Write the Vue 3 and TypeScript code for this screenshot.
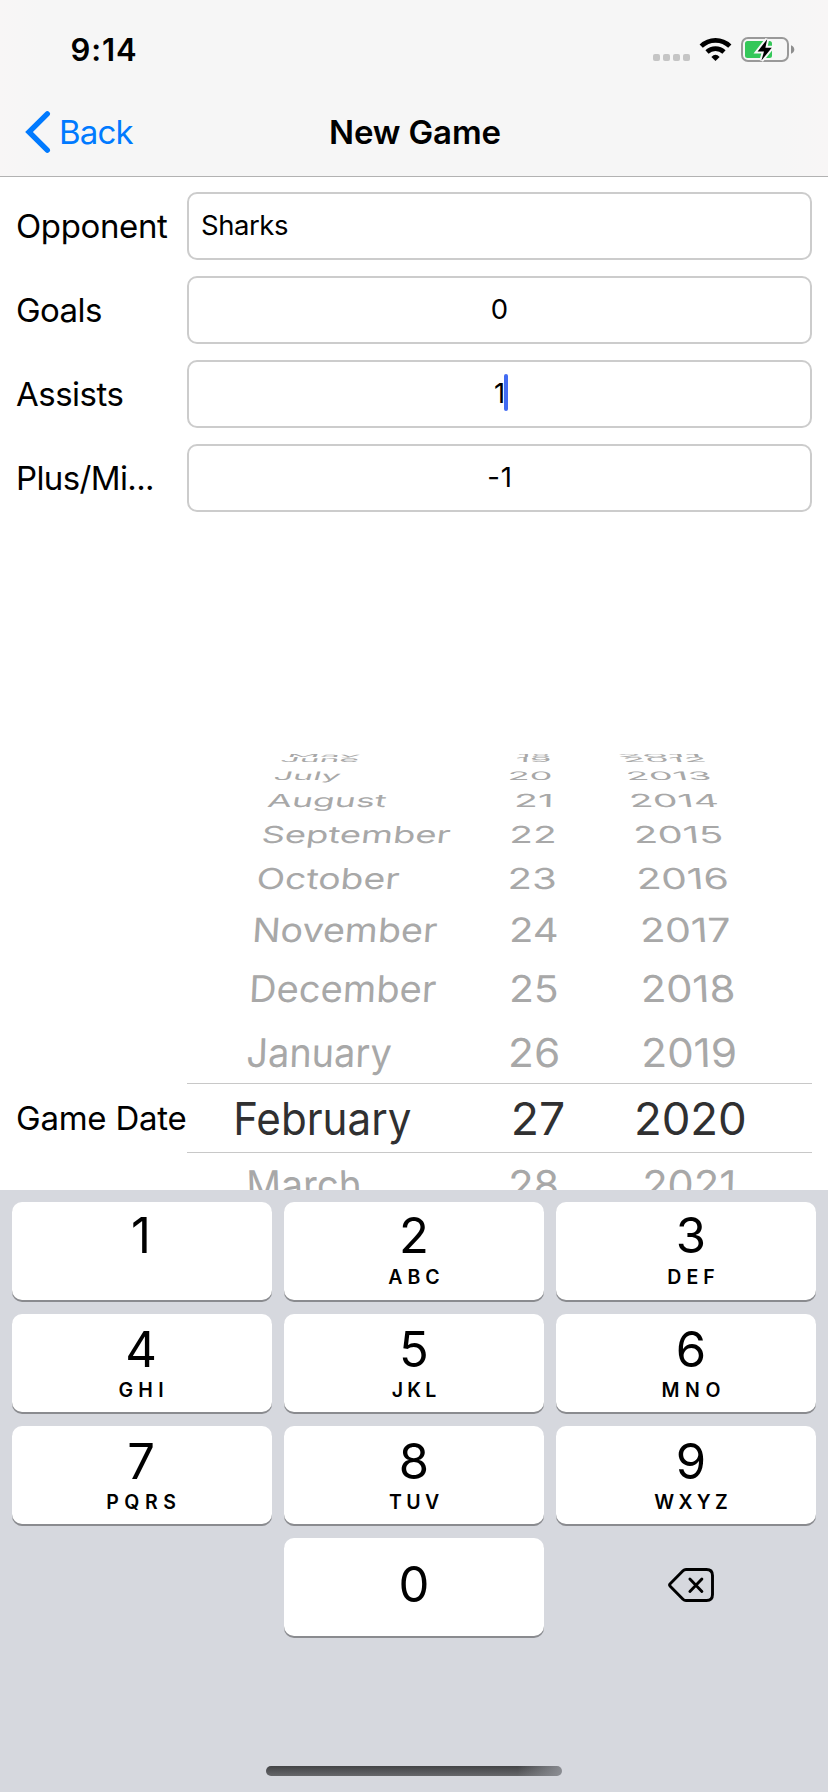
<script setup lang="ts">
interface Field { label: string; labelWidth: number; value: string; valueWidth: number; centered: boolean; focused: boolean }
interface Key { digit: string; letters: string; width: number }
interface WheelRow { baseline: number; cap: number; skew: number; items: [string, number, number][]; selected?: boolean }

const FAMILY = 'Inter, "Liberation Sans", sans-serif'
const ctx = document.createElement('canvas').getContext('2d')!

// Bounds of the inked part of a string, relative to its origin.
function ink(text: string, size: number, weight: number) {
  ctx.font = `${weight} ${size}px ${FAMILY}`
  const m = ctx.measureText(text)
  return { left: -m.actualBoundingBoxLeft, right: m.actualBoundingBoxRight }
}

// Tracking that brings a string to the wanted width.
function track(text: string, size: number, weight: number, width: number) {
  if (text.length < 2) return {}
  const b = ink(text, size, weight)
  const spacing = (width - (b.right - b.left)) / (text.length - 1)
  return { letterSpacing: `${spacing.toFixed(3)}px`, marginRight: `${(-spacing).toFixed(3)}px` }
}

const fields: Field[] = [
  { label: 'Opponent', labelWidth: 151, value: 'Sharks', valueWidth: 86, centered: false, focused: false },
  { label: 'Goals', labelWidth: 84, value: '0', valueWidth: 14, centered: true, focused: false },
  { label: 'Assists', labelWidth: 106.5, value: '1', valueWidth: 8, centered: true, focused: true },
  { label: 'Plus/Mi...', labelWidth: 134, value: '-1', valueWidth: 21.5, centered: true, focused: false },
]

const keys: Key[] = [
  { digit: '1', letters: '', width: 0 },
  { digit: '2', letters: 'ABC', width: 51 },
  { digit: '3', letters: 'DEF', width: 46 },
  { digit: '4', letters: 'GHI', width: 43.7 },
  { digit: '5', letters: 'JKL', width: 44.5 },
  { digit: '6', letters: 'MNO', width: 57 },
  { digit: '7', letters: 'PQRS', width: 68 },
  { digit: '8', letters: 'TUV', width: 50 },
  { digit: '9', letters: 'WXYZ', width: 73 },
]

// Each item is [text, left edge, right edge]; rows flatten towards the top of the drum.
const wheel: WheelRow[] = [
  { baseline: 757.3, cap: 3, skew: 0.5, items: [['May', 289, 359], ['18', 519, 549], ['2011', 620, 700]] },
  { baseline: 762.3, cap: 5, skew: 0.4, items: [['June', 281, 357], ['19', 517, 549.5], ['2012', 626, 705]] },
  { baseline: 779.7, cap: 8.5, skew: 0.3, items: [['July', 274.3, 339], ['20', 510, 551], ['2013', 629.5, 710.5]] },
  { baseline: 807, cap: 13, skew: 0.19, items: [['August', 267.3, 385], ['21', 516.7, 551], ['2014', 633, 717.5]] },
  { baseline: 843, cap: 17, skew: 0.12, items: [['September', 262.3, 449], ['22', 512, 554], ['2015', 637, 722.5]] },
  { baseline: 888.6, cap: 21, skew: 0.09, items: [['October', 257.5, 398], ['23', 510.3, 554.7], ['2016', 640, 727.5]] },
  { baseline: 942, cap: 24.3, skew: 0.07, items: [['November', 254, 436], ['24', 511.7, 556.3], ['2017', 643.5, 730]] },
  { baseline: 1002.2, cap: 26.8, skew: 0.05, items: [['December', 251, 435.3], ['25', 511.7, 557], ['2018', 644, 733.8]] },
  { baseline: 1066.7, cap: 28.8, skew: 0.03, items: [['January', 247.7, 390.7], ['26', 511, 558], ['2019', 644.5, 735.3]] },
  { baseline: 1135, cap: 32.5, skew: 0, selected: true, items: [['February', 236, 410.7], ['27', 514, 563.3], ['2020', 637, 745]] },
  { baseline: 1199, cap: 28.8, skew: -0.03, items: [['March', 249.5, 359.5], ['28', 511, 557.3], ['2021', 644.5, 733]] },
]

const glyphs = wheel.flatMap((row) =>
  row.items.map(([text, left, right], column) => {
    const b = ink(text, 44, 400)
    const sx = (right - left) / (b.right - b.left)
    const sy = row.cap / (44 * 0.727)
    const lean = row.skew * [1, 0.1, -0.9][column]
    const transform = `matrix(${sx} 0 ${-lean * sy} ${sy} ${left - b.left * sx} ${row.baseline})`
    return { text, transform, selected: !!row.selected }
  }),
)
</script>

<template>
  <div class="screen">
    <header>
      <div class="status">
        <span class="time" :style="track('9:14', 31, 600, 64.5)">9:14</span>
        <svg class="indicators" width="144" height="30" viewBox="652 35 144 30">
          <g fill="#c5c5c5">
            <rect v-for="n in 4" :key="n" :x="643 + n * 10" y="54" width="7" height="7" rx="2" />
          </g>
          <g fill="none" stroke="#000" stroke-width="4.6">
            <path d="M701.2 46.2A20.4 20.4 0 0 1 729.8 46.2" />
            <path d="M707 52A12.3 12.3 0 0 1 724 52" />
          </g>
          <path d="M715.5 61L711.4 56.9Q715.5 52.8 719.6 56.9Z" fill="#000" />
          <rect x="742" y="38" width="46" height="23" rx="6" fill="none" stroke="#999" stroke-width="2" />
          <path d="M791 45.2Q794.3 46.5 794.3 49.5Q794.3 52.5 791 53.8Z" fill="#8e8e8e" />
          <rect x="745" y="41" width="27" height="17" rx="2.5" fill="#34c759" />
          <path d="M767.2 39.2L757.6 51.5H764L761.4 60.6L771.8 47.7H765.4Z" fill="#000" stroke="#f8f8f8" stroke-width="4" paint-order="stroke" />
        </svg>
      </div>
      <nav>
        <a class="back">
          <svg width="26" height="44" viewBox="25 110 26 44"><path d="M47.3 113.8L29 132L47.3 150.2" fill="none" stroke="#007aff" stroke-width="5.4" stroke-linecap="round" stroke-linejoin="miter" /></svg>
          <span class="back-text" :style="track('Back', 33, 400, 72.5)">Back</span>
        </a>
        <h1><span :style="track('New Game', 33, 600, 169.5)">New Game</span></h1>
      </nav>
    </header>

    <main>
      <div v-for="f in fields" :key="f.label" class="row">
        <label><span :style="track(f.label, 33, 400, f.labelWidth)">{{ f.label }}</span></label>
        <div class="input" :class="{ centered: f.centered }">
          <span class="value" :style="track(f.value, 27.5, 400, f.valueWidth)">{{ f.value }}<i v-if="f.focused" class="caret" /></span>
        </div>
      </div>
      <div class="date-row">
        <label><span :style="track('Game Date', 33, 400, 168.5)">Game Date</span></label>
        <svg width="625" height="436" viewBox="187 754 625 436">
          <path d="M187 1083.5H812M187 1152.5H812" stroke="#c8c8c8" stroke-width="1" />
          <text v-for="g in glyphs" :key="g.text" class="drum" :class="{ selected: g.selected }" :transform="g.transform">{{ g.text }}</text>
        </svg>
      </div>
    </main>

    <section class="keyboard">
      <div class="keys">
        <div v-for="k in keys" :key="k.digit" class="key">
          <span class="digit">{{ k.digit }}</span>
          <span class="letters" :style="track(k.letters, 19.5, 600, k.width)">{{ k.letters }}</span>
        </div>
        <div class="blank" />
        <div class="key zero"><span class="digit">0</span></div>
        <div class="blank erase">
          <svg width="48" height="36" viewBox="0 0 48 36" fill="none" stroke="#000" stroke-width="2.9" stroke-linecap="round" stroke-linejoin="round">
            <path d="M19 2.5H39.5Q45.5 2.5 45.5 8.5V27.5Q45.5 33.5 39.5 33.5H19Q17.3 33.5 16 32.2L3.2 19.2Q2 18 3.2 16.8L16 3.8Q17.3 2.5 19 2.5Z" />
            <path d="M22.9 12L34.9 24.4M34.9 12L22.9 24.4" />
          </svg>
        </div>
      </div>
      <div class="home" />
    </section>
  </div>
</template>

<style>
body { margin: 0; background: #fff; }
</style>

<style scoped>
.screen {
  width: 828px;
  height: 1792px;
  display: flex;
  flex-direction: column;
  overflow: hidden;
  background: #fff;
  color: #000;
  font-family: Inter, "Liberation Sans", sans-serif;
  white-space: nowrap;
}
header {
  height: 176px;
  flex: none;
  border-bottom: 1px solid #b2b2b2;
  background: linear-gradient(90deg, #f8f6f6, #f6f6f6 40px, #f6f6f6 780px, #f8f6f6);
}
.status {
  height: 88px;
  box-sizing: border-box;
  padding: 12px 32px 0 70.5px;
  display: flex;
  justify-content: space-between;
  align-items: flex-start;
}
.time { font-size: 31px; font-weight: 600; line-height: 75px; }
.indicators { margin-top: 23px; }
nav {
  height: 88px;
  display: grid;
  grid-template-columns: 1fr auto 1fr;
  align-items: center;
}
.back { display: flex; align-items: center; padding-left: 25px; color: #007aff; font-size: 33px; }
.back-text { padding-left: 8px; }
h1 { margin: 0; padding-left: 2px; font-size: 33px; font-weight: 600; }
main {
  height: 1013px;
  flex: none;
  box-sizing: border-box;
  padding: 15px 16px 0;
  display: flex;
  flex-direction: column;
  gap: 16px;
}
.row { display: grid; grid-template-columns: 171px 625px; height: 68px; align-items: center; }
label { font-size: 33px; line-height: 40px; }
.input {
  height: 68px;
  box-sizing: border-box;
  border: 2px solid #ccc;
  border-radius: 10px;
  padding: 0 12px 2px;
  display: flex;
  align-items: center;
  font-size: 27.5px;
}
.centered { justify-content: center; }
.value { position: relative; }
.caret {
  position: absolute;
  right: -3px;
  top: -2px;
  width: 4px;
  height: 37px;
  border-radius: 2px;
  background: #426bf2;
}
.date-row { display: grid; grid-template-columns: 171px 625px; margin-top: 226px; height: 436px; }
.date-row label { padding-top: 344px; }
.date-row svg { display: block; }
.drum { font-size: 44px; fill: #a8a8a8; }
.drum.selected { fill: #303031; }
.keyboard {
  flex: 1;
  background: #d6d8de;
  padding: 12px 12px 0;
  display: flex;
  flex-direction: column;
  align-items: center;
}
.keys { display: grid; grid-template-columns: repeat(3, 260px); grid-auto-rows: 98px; gap: 14px 12px; }
.key {
  border-radius: 10px;
  background: #fff;
  box-shadow: 0 2px 0 #8a8b8f;
  display: flex;
  flex-direction: column;
  align-items: center;
}
.key:nth-child(3n + 1) { padding-right: 2px; }
.key:nth-child(3n) { padding-left: 10px; width: 250px; }
.digit { font-size: 49px; line-height: 60px; padding-top: 6px; }
.letters { font-size: 19.5px; font-weight: 600; line-height: 20px; }
.key:nth-child(-n + 3) .digit { padding-top: 4px; }
.key:nth-child(-n + 3) .letters { padding-top: 1px; }
.zero .digit { padding-top: 17px; }
.erase { display: flex; justify-content: center; padding: 12px 0 0 10px; }
.erase svg { margin-top: 17px; }
.home {
  width: 296px;
  height: 10px;
  margin-top: 130px;
  border-radius: 5px;
  background: linear-gradient(90deg, rgba(145, 147, 153, 0) 85%, rgba(145, 147, 153, .9)), linear-gradient(#434446, #66676a);
}
</style>
